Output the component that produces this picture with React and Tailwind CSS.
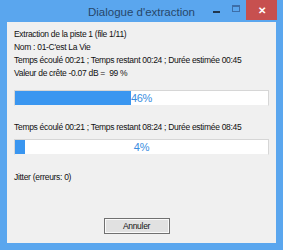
import { useState } from 'react';

const Bar = ({ value }) => (
    <div className="relative h-[16px] bg-white border border-[#d6d6d6] border-b-[#f0f0f0]">
        <div className="h-full bg-[#3a96f0]" style={{ width: `${value}%` }} />
        <span className="absolute inset-0 flex items-center justify-center text-[11px] text-[#3a8de0] leading-none">
            {value}%
        </span>
    </div>
);

const App = () => {
    const [lines] = useState([
        'Extraction de la piste 1 (file 1/11)',
        "Nom : 01-C'est La Vie",
        'Temps écoulé 00:21 ; Temps restant 00:24 ; Durée estimée 00:45',
        'Valeur de crête -0.07 dB =  99 %',
    ]);

    return (
        <div className="w-[283px] h-[250px] bg-[#5aa6ee] flex flex-col font-['Liberation_Sans',Arial,sans-serif]">
            <div className="h-[22px] flex items-start shrink-0">
                <div className="w-[77px] shrink-0" />
                <div className="flex-1 text-center text-[11.5px] text-[#27466a] leading-[20px] pt-[2px] whitespace-nowrap">
                    Dialogue d'extraction
                </div>
                <div className="w-[77px] shrink-0 flex items-start">
                    <div className="w-[20px] h-[20px] flex items-center justify-center">
                        <div className="w-[7px] h-[2px] bg-[#20364e] mt-[4px]" />
                    </div>
                    <div className="w-[20px] h-[20px] flex items-center justify-center">
                        <div className="w-[8px] h-[7px] border border-[#3d6ea8] border-t-2 mb-[3px]" />
                    </div>
                    <div className="w-[31px] h-[20px] bg-[#c7504f] flex items-center justify-center text-white text-[10px] font-bold">
                        ✕
                    </div>
                </div>
            </div>
            <div className="flex-1 mx-[7px] mb-[7px] bg-[#f0f0f0] flex flex-col px-[7px] pt-[6px] text-[8.5px] tracking-[-0.3px] text-[#111]">
                <div className="flex flex-col leading-[13px]">
                    {lines.map((l) => (
                        <div key={l} className="whitespace-pre">{l}</div>
                    ))}
                </div>
                <div className="mt-[10px]">
                    <Bar value={46} />
                </div>
                <div className="mt-[15px] leading-[12px] whitespace-nowrap">
                    Temps écoulé 00:21 ; Temps restant 08:24 ; Durée estimée 08:45
                </div>
                <div className="mt-[6px]">
                    <Bar value={4} />
                </div>
                <div className="mt-[16px] leading-[12px]">Jitter (erreurs: 0)</div>
                <div className="mt-auto mb-[9px] flex justify-center">
                    <button className="w-[66px] h-[16px] mr-[10px] bg-[#e1e1e1] border border-[#707070] shadow-[inset_0_0_0_1px_#fafafa] text-[8.5px] tracking-[-0.3px] leading-none">
                        Annuler
                    </button>
                </div>
            </div>
        </div>
    );
};

export default App;
